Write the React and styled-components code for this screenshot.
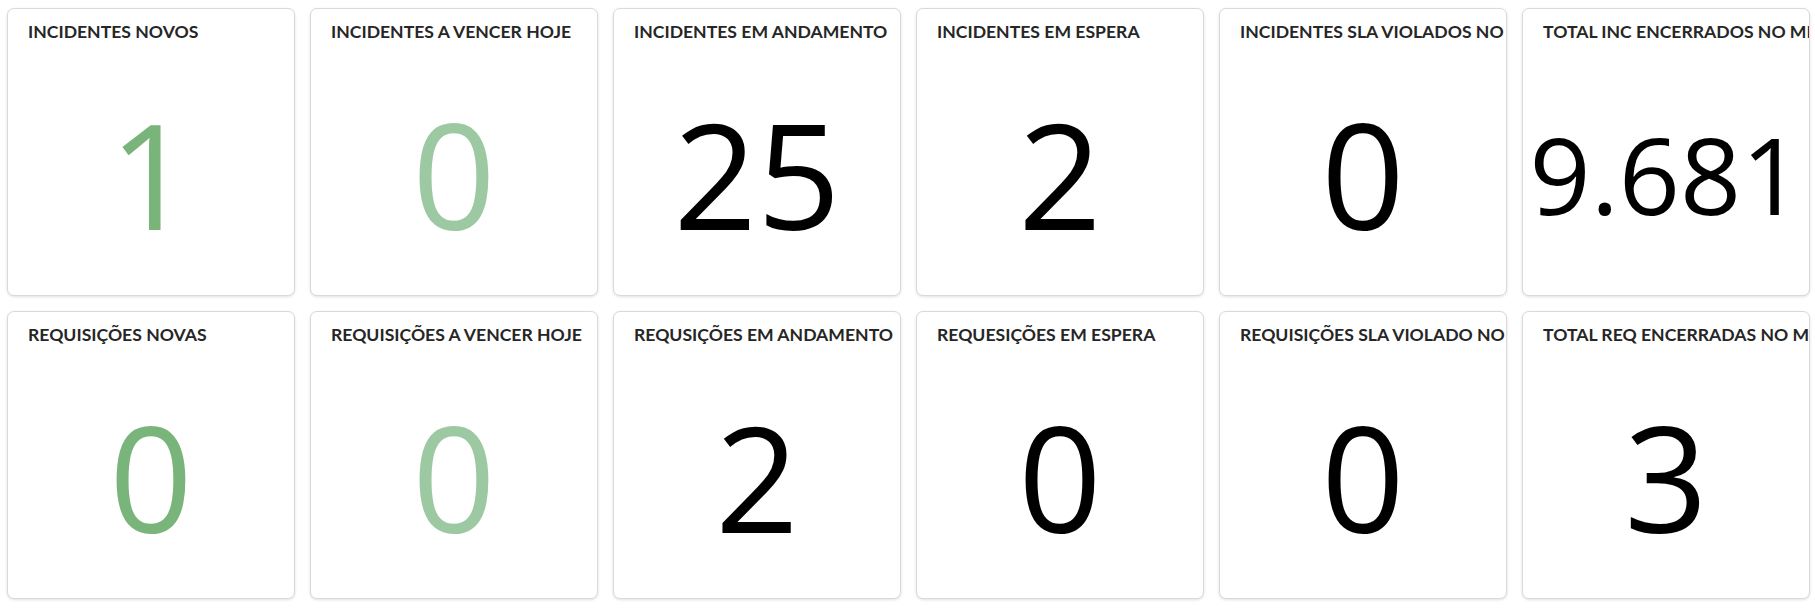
import { createGlobalStyle, styled } from 'styled-components'

const GlobalStyle = createGlobalStyle`
  html, body {
    margin: 0;
    padding: 0;
    background: #ffffff;
  }
`

const Board = styled.div`
  display: grid;
  grid-template-columns: repeat(6, 288px);
  grid-auto-rows: 288px;
  gap: 15px;
  padding: 8px 7px;
`

const Card = styled.div`
  display: flex;
  flex-direction: column;
  background: #fff;
  border: 1px solid #d9d9d9;
  border-radius: 7px;
  box-shadow: 0 1px 3px rgba(0, 0, 0, 0.12);
  overflow: hidden;
`

const Title = styled.div`
  padding: 12px 21px 0 20px;
  font-family: Lato, 'Noto Sans', sans-serif;
  font-weight: 700;
  font-size: 17.6px;
  color: #262626;
  white-space: nowrap;
  overflow: hidden;
`

const Value = styled.div`
  flex: 1;
  display: flex;
  align-items: center;
  justify-content: center;
  padding-top: 10px;
  font-family: 'Open Sans', 'Noto Sans', sans-serif;
  font-weight: 400;
  font-size: ${(p) => p.$size || 146}px;
  line-height: 1;
  color: ${(p) => p.$color || '#000'};
`

const GREEN = '#79b47b'
const LIGHT = '#9cc9a1'

// os dois primeiros de cada linha vem em verde
const cards = [
  { title: 'INCIDENTES NOVOS', value: '1', color: GREEN },
  { title: 'INCIDENTES A VENCER HOJE', value: '0', color: LIGHT },
  { title: 'INCIDENTES EM ANDAMENTO', value: '25' },
  { title: 'INCIDENTES EM ESPERA', value: '2' },
  { title: 'INCIDENTES SLA VIOLADOS NO MÊS', value: '0' },
  { title: 'TOTAL INC ENCERRADOS NO MÊS', value: '9.681', size: 107 },
  { title: 'REQUISIÇÕES NOVAS', value: '0', color: GREEN },
  { title: 'REQUISIÇÕES A VENCER HOJE', value: '0', color: LIGHT },
  { title: 'REQUSIÇÕES EM ANDAMENTO', value: '2' },
  { title: 'REQUESIÇÕES EM ESPERA', value: '0' },
  { title: 'REQUISIÇÕES SLA VIOLADO NO MÊS', value: '0' },
  { title: 'TOTAL REQ ENCERRADAS NO MÊS', value: '3' },
]

export default function App() {
  return (
    <>
      <GlobalStyle />
      <Board>
        {cards.map((c) => (
          <Card key={c.title}>
            <Title>{c.title}</Title>
            <Value $color={c.color} $size={c.size}>
              {c.value}
            </Value>
          </Card>
        ))}
      </Board>
    </>
  )
}
